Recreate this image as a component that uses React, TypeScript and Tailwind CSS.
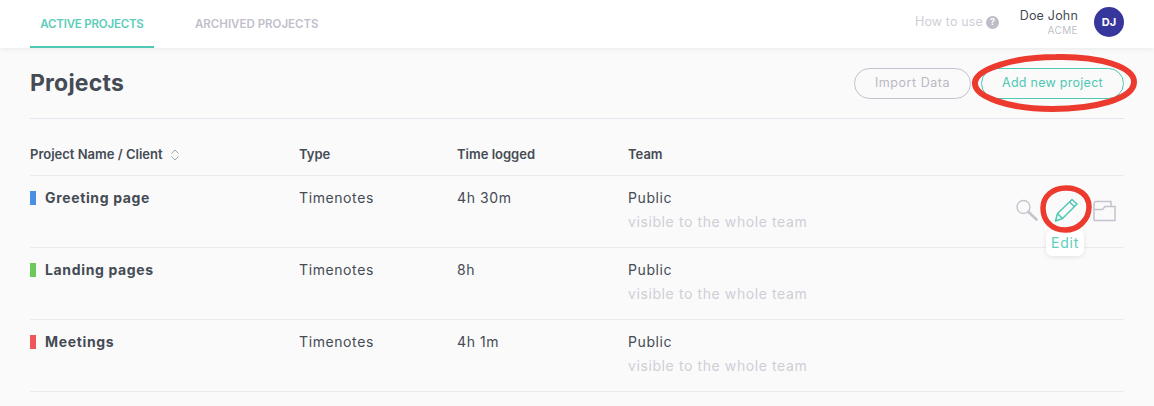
const projects = [
  { name: "Greeting page", color: "bg-[#4a90e2]", time: "4h 30m", actions: true },
  { name: "Landing pages", color: "bg-[#6cc85a]", time: "8h", actions: false },
  { name: "Meetings", color: "bg-[#f0555a]", time: "4h 1m", actions: false }
];

function SearchIcon() {
  return (
    <svg width="24" height="24" viewBox="0 0 24 24" fill="none" stroke="#c4c3cd" className="mt-[1px]">
      <circle cx="7.5" cy="8" r="6.5" strokeWidth="1.3" />
      <path d="M12.5 13l8 7.5" strokeWidth="2.6" strokeLinecap="round" />
    </svg>
  );
}

function PencilIcon() {
  return (
    <svg width="24" height="24" viewBox="0 0 24 24" fill="none" stroke="#4fc8b4" strokeWidth="1.5" strokeLinejoin="round">
      <path d="M1.5 23l2-7.5L18 1.5l5 4.5L8.5 20.5z" />
      <path d="M15.5 4l5 4.6M3.5 15.5l5 5" />
    </svg>
  );
}

function FolderIcon() {
  return (
    <svg width="24" height="22" viewBox="0 0 24 22" fill="none" stroke="#c4c3cd" strokeWidth="1.5" className="mt-[2px]">
      <path d="M2 20.5V3.5a2 2 0 0 1 2-2h15v5" />
      <path d="M2 20.5h21V6.5H13l-2.5 3H2" />
    </svg>
  );
}

export default function App() {
  return (
    <div className="relative h-[406px] w-[1154px] overflow-hidden bg-[#fafafa] font-['Inter',sans-serif] text-[#454b54]">
      <header className="flex h-[48px] items-start justify-between bg-white px-[30px] shadow-[0_1px_6px_rgba(0,0,0,0.07)]">
        <nav className="flex text-[11.5px] font-semibold leading-[48px]">
          <a className="h-[48px] w-[124px] border-b-2 border-[#4fc8b4] text-center tracking-[-0.2px] text-[#5ccdb9]">ACTIVE PROJECTS</a>
          <a className="ml-[41px] text-[#c0bfcb]">ARCHIVED PROJECTS</a>
        </nav>
        <div className="flex items-center pt-[7px]">
          <span className="text-[12.5px] tracking-[0.15px] text-[#cfced6]">How to use</span>
          <span className="ml-[3px] flex h-[13px] w-[13px] items-center justify-center rounded-full bg-[#bdbcc7] text-[9px] font-bold text-white">?</span>
          <div className="ml-[20px] flex w-[59px] flex-col items-end">
            <span className="text-[12.5px] leading-[16px] tracking-[0.2px] text-[#454b54]">Doe John</span>
            <span className="text-[10px] leading-[13px] tracking-[0.4px] text-[#c0bfcb]">ACME</span>
          </div>
          <span className="ml-[16px] flex h-[30px] w-[30px] items-center justify-center rounded-full bg-[#37369c] text-[11px] font-bold text-white">DJ</span>
        </div>
      </header>

      <main className="px-[30px]">
        <div className="flex h-[71px] items-center justify-between border-b border-[#e6e5ee]">
          <h1 className="text-[23px] font-bold tracking-[0.2px]">Projects</h1>
          <div className="flex gap-[10px]">
            <button className="h-[31px] w-[117px] rounded-full border border-[#c4c3cd] text-[12.5px] tracking-[0.55px] text-[#b9b8c3]">Import Data</button>
            <button className="h-[31px] w-[143px] rounded-full border border-[#4fc8b4] text-[12.5px] tracking-[0.27px] text-[#4fc8b4]">Add new project</button>
          </div>
        </div>

        <div className="grid h-[57px] grid-cols-[269px_158px_171px_1fr] items-center border-b border-[#ebebeb] pt-[15px] text-[13px] font-semibold">
          <div className="flex items-center gap-[7px]">
            Project Name / Client
            <svg width="10" height="12" viewBox="0 0 10 12" fill="none" stroke="#8f8f98" strokeWidth="0.8">
              <path d="M1.5 4.5L5 1l3.5 3.5M1.5 7.5L5 11l3.5-3.5" />
            </svg>
          </div>
          <div>Type</div>
          <div>Time logged</div>
          <div>Team</div>
        </div>

        {projects.map((project) => (
          <div key={project.name} className="relative grid h-[72px] grid-cols-[269px_158px_171px_1fr] border-b border-[#ebebeb] pt-[12px] text-[14px] leading-[20px] tracking-[0.6px]">
            <div className="flex items-start font-bold tracking-[0.65px]">
              <span className={`mt-[3px] h-[14px] w-[6px] ${project.color}`} />
              <span className="ml-[9px]">{project.name}</span>
            </div>
            <div>Timenotes</div>
            <div>{project.time}</div>
            <div>
              <div>Public</div>
              <div className="mt-[4px] text-[#cfced6]">visible to the whole team</div>
            </div>
            {project.actions && (
              <div className="absolute right-[8px] top-[22px] flex gap-[14px]">
                <SearchIcon />
                <PencilIcon />
                <FolderIcon />
                <span className="absolute left-[30px] top-[32px] rounded-[6px] bg-white px-[5px] py-[3px] text-[14px] leading-[20px] tracking-[0.8px] text-[#5ccdb9] shadow-[0_1px_5px_rgba(0,0,0,0.1)]">Edit</span>
              </div>
            )}
          </div>
        ))}
      </main>

      {/* red annotation marks */}
      <svg className="absolute left-[964px] top-[47px]" width="180" height="72" viewBox="0 0 180 72" fill="none">
        <path d="M11 35C13 22 50 10 92 10C136 9 170 20 170 35C170 52 130 62 88 62C46 62 9 50 11 35Z" stroke="#ec3a2f" strokeWidth="6" />
      </svg>
      <svg className="absolute left-[1035px] top-[180px]" width="62" height="58" viewBox="0 0 62 58" fill="none">
        <path d="M8 28C8 16 18 8 31 8C44 8 54 15 54 27C54 40 43 50 30 50C17 50 8 41 8 28Z" stroke="#ec3a2f" strokeWidth="5.5" />
      </svg>
    </div>
  );
}
